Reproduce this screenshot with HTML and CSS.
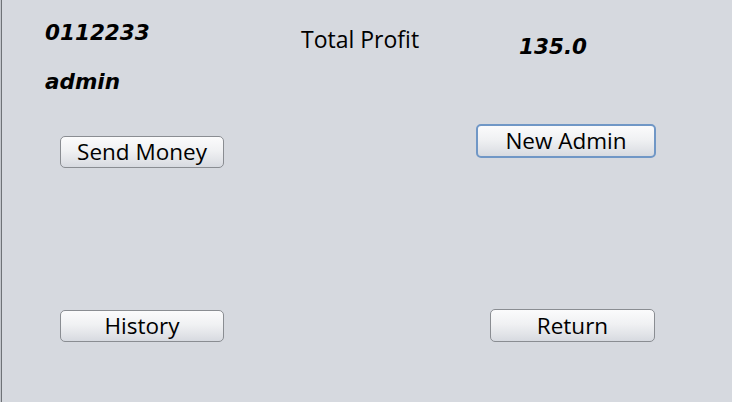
FILE: index.html
```html
<!DOCTYPE html>
<html>
<head>
<meta charset="utf-8">
<link rel="stylesheet" href="styles.css">
</head>
<body>
<div class="frame">
  <div class="header">
    <div class="user">
      <div class="strong">0112233</div>
      <div class="strong name">admin</div>
    </div>
    <div class="label">Total Profit</div>
    <div class="strong amount">135.0</div>
  </div>
  <div class="row row-one">
    <button class="btn send">Send Money</button>
    <button class="btn focused admin-btn">New Admin</button>
  </div>
  <div class="row row-two">
    <button class="btn history">History</button>
    <button class="btn ret">Return</button>
  </div>
</div>
</body>
</html>
```
FILE: styles.css
```css
html, body {
  margin: 0;
  padding: 0;
  height: 100%;
}
body {
  background: #c3c6cc;
  padding-left: 1px;
  box-sizing: border-box;
  overflow: hidden;
}
.frame {
  box-sizing: border-box;
  height: 100%;
  border-left: 1px solid #6f7277;
  background: #d6d9df;
  font-family: "Open Sans", "DejaVu Sans", sans-serif;
  color: #000;
}
.header {
  box-sizing: border-box;
  height: 124px;
  display: grid;
  grid-template-columns: 256px 218px 1fr;
  padding-left: 43px;
  align-items: start;
}
.strong {
  font-family: "DejaVu Sans", sans-serif;
  font-weight: 700;
  font-style: italic;
  font-size: 21.5px;
  line-height: 26px;
}
.user {
  padding-top: 20px;
}
.name {
  margin-top: 23px;
}
.label {
  font-size: 23px;
  line-height: 26px;
  margin-top: 26px;
}
.amount {
  margin-top: 34px;
}
.row {
  display: flex;
  align-items: flex-start;
  padding-left: 58px;
}
.btn {
  box-sizing: border-box;
  height: 32px;
  width: 164px;
  padding: 0;
  border: 1px solid #8a8d92;
  border-radius: 5px;
  background: linear-gradient(#fbfbfc 0%, #f0f1f3 45%, #e3e5e9 75%, #d7dae0 100%);
  font-family: "Open Sans", "DejaVu Sans", sans-serif;
  font-size: 22.5px;
  line-height: 28px;
  color: #000;
}
.send {
  margin-top: 12px;
}
.admin-btn {
  margin-left: 252px;
  width: 180px;
  height: 34px;
  border: 2px solid #7097c6;
}
.row-two {
  margin-top: 141px;
}
.history {
  margin-top: 1px;
}
.ret {
  margin-left: 266px;
  height: 33px;
  width: 165px;
}
```
